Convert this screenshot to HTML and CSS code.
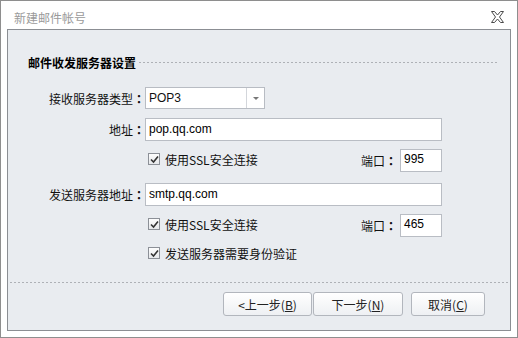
FILE: index.html
```
<!DOCTYPE html>
<html>
<head>
    <title>新建邮件帐号</title>
    <link rel="stylesheet" href="styles.css">
</head>
<body>
    <div class="window">
        <div class="title-bar">
            <div class="title">新建邮件帐号</div>
            <svg class="close-icon" width="13" height="12" viewBox="0 0 13 12">
                <polygon points="0.5,0.5 3.5,0.5 6.5,4 9.5,0.5 12.5,0.5 8.5,6 12.5,11.5 9.5,11.5 6.5,8 3.5,11.5 0.5,11.5 4.5,6" fill="#fff" stroke="#4a4a4a" stroke-width="1"/>
            </svg>
        </div>

        <div class="panel">
            <div class="section-head">
                <span class="section-title">邮件收发服务器设置</span>
                <span class="dash-line"></span>
            </div>

            <div class="form">
                <div class="row row-select">
                    <div class="label">接收服务器类型<span class="colon">：</span></div>
                    <div class="select">
                        <span class="select-value">POP3</span>
                        <span class="select-arrow"></span>
                    </div>
                </div>
                <div class="row row-gap1">
                    <div class="label">地址<span class="colon">：</span></div>
                    <div class="input wide">pop.qq.com</div>
                </div>
                <div class="row row-gap2">
                    <div class="label"></div>
                    <div class="check">
                        <span class="box">
                            <svg width="9" height="9" viewBox="0 0 9 9"><path d="M1 4.5 L3.5 7 L8 1.5" fill="none" stroke="#333" stroke-width="1.6"/></svg>
                        </span>
                        <span>使用SSL安全连接</span>
                    </div>
                    <div class="port-label">端口<span class="colon">：</span></div>
                    <div class="input port">995</div>
                </div>
                <div class="row row-gap3">
                    <div class="label">发送服务器地址<span class="colon">：</span></div>
                    <div class="input wide">smtp.qq.com</div>
                </div>
                <div class="row row-gap2">
                    <div class="label"></div>
                    <div class="check">
                        <span class="box">
                            <svg width="9" height="9" viewBox="0 0 9 9"><path d="M1 4.5 L3.5 7 L8 1.5" fill="none" stroke="#333" stroke-width="1.6"/></svg>
                        </span>
                        <span>使用SSL安全连接</span>
                    </div>
                    <div class="port-label">端口<span class="colon">：</span></div>
                    <div class="input port">465</div>
                </div>
                <div class="row row-last">
                    <div class="label"></div>
                    <div class="check">
                        <span class="box">
                            <svg width="9" height="9" viewBox="0 0 9 9"><path d="M1 4.5 L3.5 7 L8 1.5" fill="none" stroke="#333" stroke-width="1.6"/></svg>
                        </span>
                        <span>发送服务器需要身份验证</span>
                    </div>
                </div>
            </div>

            <div class="divider"></div>

            <div class="buttons">
                <button class="btn btn-prev">&lt;上一步(<u>B</u>)</button>
                <button class="btn btn-next">下一步(<u>N</u>)</button>
                <button class="btn btn-cancel">取消(<u>C</u>)</button>
            </div>
        </div>
    </div>
</body>
</html>
```

FILE: styles.css
```
body {
    margin: 0;
    font-family: "Noto Sans CJK SC", "Liberation Sans", sans-serif;
    font-size: 12px;
    color: #111;
    background: #fff;
}

.window {
    width: 518px;
    height: 338px;
    box-sizing: border-box;
    border: 1px solid #8e8e8e;
    background: #fff;
    display: flex;
    flex-direction: column;
}

.title-bar {
    height: 28px;
    padding: 4px 13px 0 13px;
    box-sizing: border-box;
    display: flex;
    justify-content: space-between;
    align-items: center;
}

.title {
    color: #9a9a9a;
    font-size: 12px;
}

.close-icon {
    display: block;
}

.panel {
    flex: 1;
    margin: 0 6px 6px 6px;
    border: 1px solid #8b8e93;
    background: #e9ecf0;
    padding: 24px 0 13px 0;
}

.section-head {
    display: flex;
    align-items: center;
    height: 16px;
    margin-left: 20px;
    margin-right: 13px;
}

.section-title {
    font-weight: bold;
    color: #000;
}

.dash-line {
    flex: 1;
    height: 1px;
    margin-left: 3px;
    background: repeating-linear-gradient(to right, #aeb1b6 0, #aeb1b6 2px, transparent 2px, transparent 4px);
}

.form {
    padding-right: 68px;
    margin-top: 17px;
}

.row {
    display: flex;
    align-items: center;
    height: 23px;
}

.row-select {
    height: 22px;
}

.row-gap1 {
    margin-top: 9px;
}

.row-gap2 {
    margin-top: 8px;
}

.row-gap3 {
    margin-top: 11px;
}

.row-last {
    margin-top: 8px;
    height: 16px;
}

.label {
    width: 137px;
    flex-shrink: 0;
    text-align: right;
    color: #111;
}

.colon {
    font-family: "Noto Sans CJK TC", "Noto Sans CJK SC", sans-serif;
    font-weight: bold;
}

.select {
    width: 120px;
    height: 22px;
    box-sizing: border-box;
    border: 1px solid #b8bcc3;
    background: #fff;
    display: flex;
    align-items: center;
}

.select-value {
    flex: 1;
    padding-left: 3px;
    font-family: "Liberation Sans", sans-serif;
    font-size: 12px;
}

.select-arrow {
    width: 17px;
    height: 20px;
    border-left: 1px solid #d3d6db;
    position: relative;
}

.select-arrow::after {
    content: "";
    position: absolute;
    left: 6px;
    top: 9px;
    border-left: 3px solid transparent;
    border-right: 3px solid transparent;
    border-top: 3px solid #777;
}

.input {
    height: 23px;
    box-sizing: border-box;
    border: 1px solid #b9bdc4;
    background: #fff;
    padding-left: 3px;
    font-family: "Liberation Sans", sans-serif;
    font-size: 12px;
    line-height: 21px;
    color: #000;
}

.wide {
    flex: 1;
}

.port {
    width: 42px;
    margin-left: 3px;
    line-height: 19px;
}

.check {
    display: flex;
    align-items: center;
    gap: 5px;
    margin-left: 3px;
    margin-top: -3px;
}

.row-last .check {
    margin-top: 0;
}

.box {
    width: 12px;
    height: 12px;
    box-sizing: border-box;
    border: 1px solid #8c9097;
    background: linear-gradient(#fdfdfd, #e6e8eb);
    display: flex;
    align-items: center;
    justify-content: center;
}

.box svg {
    display: block;
}

.port-label {
    margin-left: auto;
}

.divider {
    height: 1px;
    margin: 21px 1px 0 2px;
    background: repeating-linear-gradient(to right, #aeb1b6 0, #aeb1b6 2px, transparent 2px, transparent 4px);
}

.buttons {
    display: flex;
    justify-content: flex-end;
    margin-top: 9px;
    padding-right: 25px;
}

.btn {
    height: 24px;
    box-sizing: border-box;
    border: 1px solid #b2b6bd;
    border-radius: 3px;
    background: linear-gradient(#ffffff, #eef0f3);
    font-family: "Noto Sans CJK SC", "Liberation Sans", sans-serif;
    font-size: 12px;
    color: #222;
    padding: 0;
    cursor: pointer;
}

.btn-prev {
    width: 89px;
}

.btn-next {
    width: 90px;
    margin-left: 1px;
}

.btn-cancel {
    width: 74px;
    margin-left: 8px;
}
```
